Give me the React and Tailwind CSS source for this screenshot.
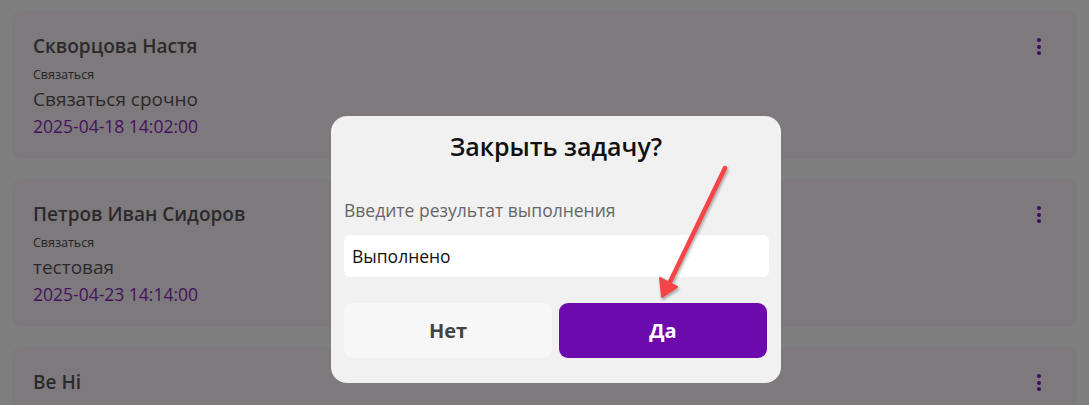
const tasks = [
  { name: "Скворцова Настя", type: "Связаться", text: "Связаться срочно", date: "2025-04-18 14:02:00" },
  { name: "Петров Иван Сидоров", type: "Связаться", text: "тестовая", date: "2025-04-23 14:14:00" },
  { name: "Be Hi" },
];

function Dots() {
  return (
    <div className="flex flex-col gap-[2.5px] pt-[4px]">
      <span className="block w-[4px] h-[4px] rounded-full bg-[#3d0b5e]" />
      <span className="block w-[4px] h-[4px] rounded-full bg-[#3d0b5e]" />
      <span className="block w-[4px] h-[4px] rounded-full bg-[#3d0b5e]" />
    </div>
  );
}

function TaskCard({ task }) {
  return (
    <div className="flex justify-between h-[148px] rounded-[10px] bg-[#7e797c] pl-[21px] pr-[36px] pt-[23px] shrink-0">
      <div>
        <div className="text-[19px] leading-[24px] font-semibold text-[#2b2a2b]">{task.name}</div>
        {task.type && (
          <>
            <div className="text-[12.5px] leading-[16px] mt-[9px] text-[#262526]">{task.type}</div>
            <div className="text-[19px] leading-[24px] mt-[4px] text-[#2b2a2b]">{task.text}</div>
            <div className="text-[17.5px] leading-[24px] mt-[3px] text-[#43135f]">{task.date}</div>
          </>
        )}
      </div>
      <Dots />
    </div>
  );
}

function Arrow() {
  return (
    <svg
      className="fixed left-0 top-0 pointer-events-none"
      width="1089"
      height="405"
      viewBox="0 0 1089 405"
    >
      <defs>
        <filter id="sh" x="-20%" y="-20%" width="140%" height="140%">
          <feDropShadow dx="1" dy="2" stdDeviation="1.5" floodColor="#000" floodOpacity="0.35" />
        </filter>
      </defs>
      <g filter="url(#sh)">
        <line x1="725" y1="168" x2="669" y2="284" stroke="#f4444a" strokeWidth="4.5" strokeLinecap="round" />
        <polygon points="662,297 660,278 677,287" fill="#f4444a" stroke="#f4444a" strokeWidth="2" strokeLinejoin="round" />
      </g>
    </svg>
  );
}

export default function App() {
  return (
    <div className="relative w-[1089px] h-[405px] overflow-hidden bg-[#7f7f7f] font-['Open_Sans',sans-serif]">
      <div className="flex flex-col gap-[20px] pt-[11px] pl-[12px] pr-[12px]">
        {tasks.map((t) => (
          <TaskCard key={t.name} task={t} />
        ))}
      </div>

      <div className="fixed left-[331px] top-[116px] w-[450px] h-[267px] rounded-[16px] bg-[#f1f1f1] px-[13px] pt-[14px]">
        <h2 className="text-center text-[25px] leading-[32px] font-semibold text-[#111]">Закрыть задачу?</h2>
        <div className="mt-[36px] text-[17.5px] leading-[24px] text-[#666]">Введите результат выполнения</div>
        <input
          className="mt-[13px] w-[425px] h-[42px] rounded-[6px] bg-white px-[8px] text-[17.5px] text-[#111] outline-none"
          defaultValue="Выполнено"
        />
        <div className="mt-[26px] flex gap-[7px]">
          <button className="w-[208px] h-[55px] rounded-[9px] bg-[#f7f7f7] text-[20px] font-bold text-[#444]">
            Нет
          </button>
          <button className="w-[208px] h-[55px] rounded-[9px] bg-[#6c0aad] text-[20px] font-bold text-white">
            Да
          </button>
        </div>
      </div>

      <Arrow />
    </div>
  );
}
